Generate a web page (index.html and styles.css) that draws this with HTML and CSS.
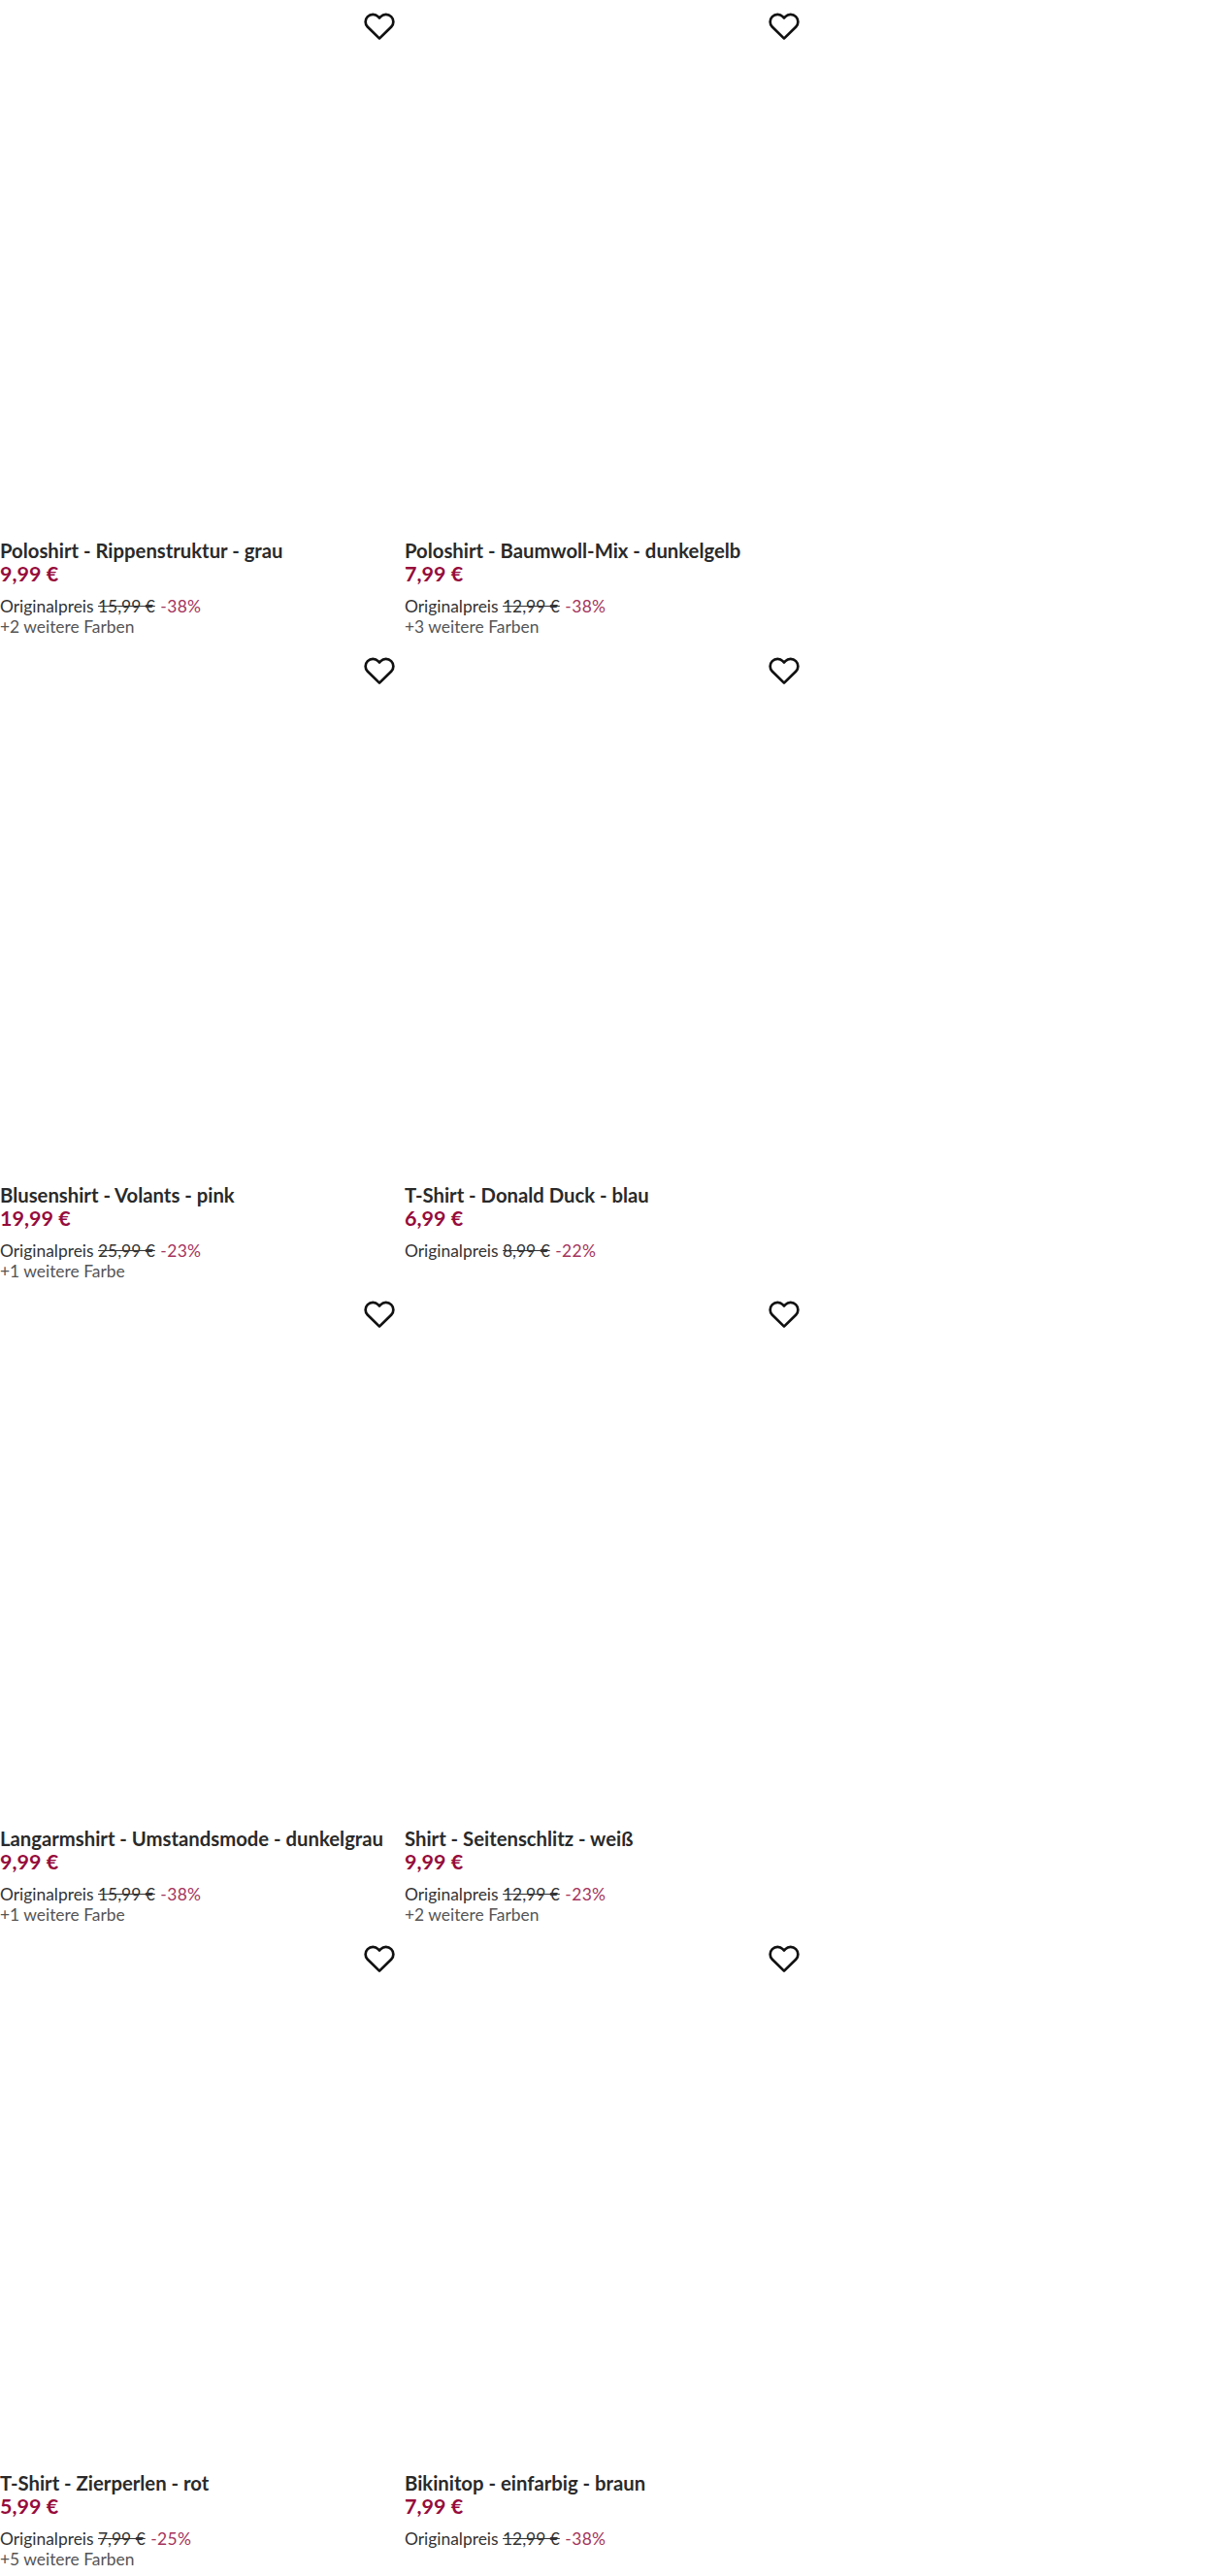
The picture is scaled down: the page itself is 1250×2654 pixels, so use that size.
FILE: index.html
```html
<!DOCTYPE html>
<html lang="de">
<head>
<meta charset="utf-8">
<title>Produkte</title>
<link rel="stylesheet" href="styles.css">
</head>
<body>
<svg class="defs" width="0" height="0" aria-hidden="true"><symbol id="heart" viewBox="0 0 32 32"><path d="M16 27.2 5.2 16.6C2.6 14 2.6 9.8 5.2 7.2c2.7-2.6 7-2.6 9.6 0L16 8.4l1.2-1.2c2.6-2.6 6.9-2.6 9.6 0 2.6 2.6 2.6 6.8 0 9.4Z" fill="none" stroke="#111" stroke-width="2.4" stroke-linejoin="round"/></symbol></svg>
<main class="grid">
<article class="card"><div class="media"><svg class="heart"><use href="#heart"/></svg></div><h2 class="name">Poloshirt - Rippenstruktur - grau</h2><p class="price">9,99 €</p><p class="orig">Originalpreis <s>15,99 €</s> <span class="off">-38%</span></p><p class="more">+2 weitere Farben</p></article>
<article class="card"><div class="media"><svg class="heart"><use href="#heart"/></svg></div><h2 class="name">Poloshirt - Baumwoll-Mix - dunkelgelb</h2><p class="price">7,99 €</p><p class="orig">Originalpreis <s>12,99 €</s> <span class="off">-38%</span></p><p class="more">+3 weitere Farben</p></article>
<article class="card"><div class="media"><svg class="heart"><use href="#heart"/></svg></div><h2 class="name">Blusenshirt - Volants - pink</h2><p class="price">19,99 €</p><p class="orig">Originalpreis <s>25,99 €</s> <span class="off">-23%</span></p><p class="more">+1 weitere Farbe</p></article>
<article class="card"><div class="media"><svg class="heart"><use href="#heart"/></svg></div><h2 class="name">T-Shirt - Donald Duck - blau</h2><p class="price">6,99 €</p><p class="orig">Originalpreis <s>8,99 €</s> <span class="off">-22%</span></p></article>
<article class="card"><div class="media"><svg class="heart"><use href="#heart"/></svg></div><h2 class="name">Langarmshirt - Umstandsmode - dunkelgrau</h2><p class="price">9,99 €</p><p class="orig">Originalpreis <s>15,99 €</s> <span class="off">-38%</span></p><p class="more">+1 weitere Farbe</p></article>
<article class="card"><div class="media"><svg class="heart"><use href="#heart"/></svg></div><h2 class="name">Shirt - Seitenschlitz - weiß</h2><p class="price">9,99 €</p><p class="orig">Originalpreis <s>12,99 €</s> <span class="off">-23%</span></p><p class="more">+2 weitere Farben</p></article>
<article class="card"><div class="media"><svg class="heart"><use href="#heart"/></svg></div><h2 class="name">T-Shirt - Zierperlen - rot</h2><p class="price">5,99 €</p><p class="orig">Originalpreis <s>7,99 €</s> <span class="off">-25%</span></p><p class="more">+5 weitere Farben</p></article>
<article class="card"><div class="media"><svg class="heart"><use href="#heart"/></svg></div><h2 class="name">Bikinitop - einfarbig - braun</h2><p class="price">7,99 €</p><p class="orig">Originalpreis <s>12,99 €</s> <span class="off">-38%</span></p></article>
</main>
</body>
</html>
```
FILE: styles.css
```css
* { box-sizing: border-box; }
html, body { margin: 0; background: #fff; }
body { font-family: "Lato", "Open Sans", sans-serif; color: #1a1a1a; height: 2654px; overflow: hidden; }
.defs { position: absolute; }
.grid { display: grid; grid-template-columns: repeat(2, 409px); column-gap: 8px; grid-auto-rows: 663.6px; }
.card { display: flex; flex-direction: column; min-width: 0; }
.media { position: relative; height: 555px; flex: none; }
.heart { position: absolute; top: 9px; right: 0; width: 36px; height: 36px; }
.name { margin: 0; font-size: 20.3px; line-height: 24px; font-weight: 700; color: #2a2a2a; white-space: nowrap; }
.price { margin: 0; font-size: 21.5px; line-height: 25px; font-weight: 700; color: #960c3c; }
.orig { margin: 10px 0 0; font-size: 17.4px; line-height: 21px; color: #333; }
.off { margin-left: 1px; letter-spacing: 0.4px; color: #a5345c; }
.more { margin: 0; font-size: 17.4px; line-height: 21px; color: #555; }
```
